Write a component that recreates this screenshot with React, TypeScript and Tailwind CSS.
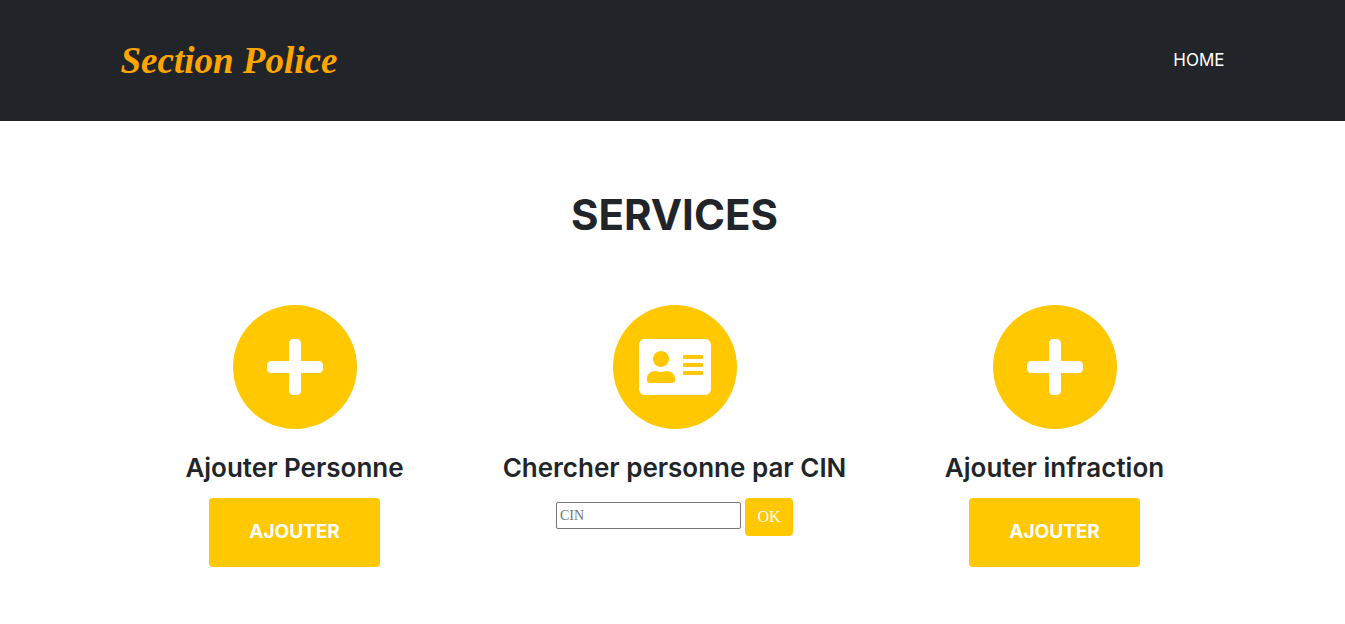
import type { ReactNode } from "react";
import { FaAddressCard, FaPlus } from "react-icons/fa";

function Service({ icon, title, children }: { icon: ReactNode; title: string; children: ReactNode }) {
  return (
    <article className="flex flex-col items-center">
      <div className="flex size-31 items-center justify-center rounded-full bg-[#ffc800] text-white">{icon}</div>
      <h3 className="mt-6 mb-4 text-center text-[26px] leading-[29px] font-semibold whitespace-nowrap">{title}</h3>
      {children}
    </article>
  );
}

function AddButton() {
  return (
    <button
      type="button"
      className="h-[69px] w-[171px] rounded bg-[#ffc800] text-[19px] font-bold text-white uppercase hover:bg-[#e6b400]"
    >
      Ajouter
    </button>
  );
}

export default function App() {
  return (
    <div className="min-h-screen bg-white font-['Inter',sans-serif] text-[#212529]">
      <header className="bg-[#212529] py-6">
        <nav className="mx-auto flex h-[73px] max-w-[1104px] items-center justify-between">
          <a
            href="#accueil"
            className="font-['Liberation_Serif',serif] text-[37px] font-bold text-[#ffa500] italic"
          >
            Section Police
          </a>
          <a href="#accueil" className="text-[17px] text-white uppercase hover:text-[#ffc800]">
            Home
          </a>
        </nav>
      </header>

      <main className="mx-auto max-w-[1144px] pt-16 pb-14 pl-1">
        <h1 className="text-center text-[42px] leading-[60px] font-bold uppercase">Services</h1>
        <section className="mt-15 grid grid-cols-3">
          <Service icon={<FaPlus className="h-16 w-14" />} title="Ajouter Personne">
            <AddButton />
          </Service>
          <Service icon={<FaAddressCard className="h-16 w-18" />} title="Chercher personne par CIN">
            <form className="flex items-start gap-1 font-['Liberation_Serif',serif]">
              <input
                type="text"
                name="cin"
                aria-label="CIN"
                placeholder="CIN"
                className="mt-1 h-[27px] w-[185px] rounded-[2px] border border-[#767676] bg-white px-[3px] text-sm placeholder:text-[#757575]"
              />
              <button
                type="button"
                className="h-[38px] w-12 rounded bg-[#ffc800] text-base text-white hover:bg-[#e6b400]"
              >
                OK
              </button>
            </form>
          </Service>
          <Service icon={<FaPlus className="h-16 w-14" />} title="Ajouter infraction">
            <AddButton />
          </Service>
        </section>
      </main>
    </div>
  );
}
